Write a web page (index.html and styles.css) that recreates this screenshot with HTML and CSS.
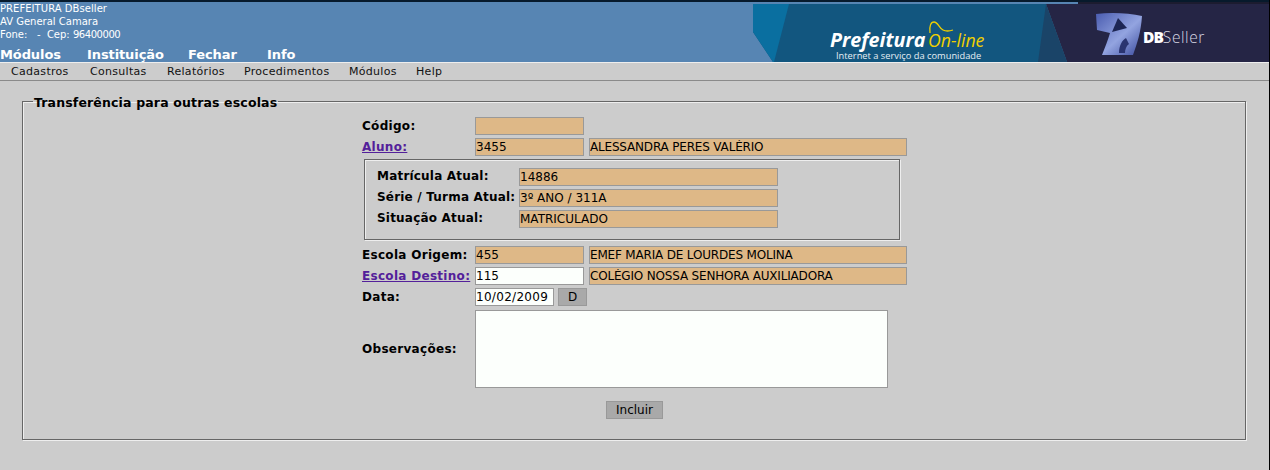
FILE: index.html
```html
<!DOCTYPE html>
<html lang="pt">
<head>
<meta charset="utf-8">
<title>Transferência para outras escolas</title>
<link rel="stylesheet" href="styles.css">
</head>
<body>
<header class="top">
  <div class="top-left">
    <div class="inst">
      <div class="l1">PREFEITURA DBseller</div>
      <div>AV General Camara</div>
      <div>Fone: &nbsp; - &nbsp;Cep: <span class="cep">96400000</span></div>
    </div>
    <nav class="mainnav">
      <span class="m1">Módulos</span><span class="m2">Instituição</span><span class="m3">Fechar</span><span class="m4">Info</span>
    </nav>
  </div>
  <svg class="banner" width="516" height="60" viewBox="0 0 516 60" xmlns="http://www.w3.org/2000/svg">
    <defs>
      <linearGradient id="cube" x1="0" y1="0" x2="1" y2="1">
        <stop offset="0" stop-color="#4a5cb0"/>
        <stop offset="0.55" stop-color="#93a4e0"/>
        <stop offset="1" stop-color="#3a4a9c"/>
      </linearGradient>
    </defs>
    <rect x="0" y="0" width="325" height="2" fill="#5785b3"/>
    <rect x="325" y="0" width="191" height="2" fill="#1c1c30"/>
    <polygon points="0,2 293,2 314,60 20,60 0,30" fill="#12567f"/>
    <polygon points="293,2 516,2 516,60 314,60" fill="#252545"/>
    <polygon points="293,2 314,60 285,60" fill="#1a4468"/>
    <polygon points="0,2 36,2 21,60 20,60 0,30" fill="#0a6fa0"/>
    <text class="b-pref" x="77" y="45">Prefeitura</text>
    <text class="b-on" x="175" y="45">On-line</text>
    <path d="M177 31 C176 24 178 20 181 20 C185 20 186 26 190 28 C193 29.5 197 29 200 28" fill="none" stroke="#f0d000" stroke-width="1.3"/>
    <text class="b-sub" x="83" y="56.5">Internet a serviço da comunidade</text>
    <path d="M343 12 C358 10 376 11 389 14 C388 30 384 42 380 53 L349 53 C352 45 355 38 357 31 L344 28 Z" fill="url(#cube)"/>
    <path d="M365 16 L374 26 L359 30 Z" fill="#1d2654"/>
    <path d="M366 51 C366 44 369 38 373 36 L376 42 C373 44 372 48 372 51 Z" fill="#2a3470"/>
    <text class="b-db" x="390" y="41">DB<tspan class="b-seller">Seller</tspan></text>
  </svg>
</header>
<nav class="menubar">
  <span class="i1">Cadastros</span><span class="i2">Consultas</span><span class="i3">Relatórios</span><span class="i4">Procedimentos</span><span class="i5">Módulos</span><span>Help</span>
</nav>
<main class="page">
  <fieldset class="outer">
    <legend>Transferência para outras escolas</legend>
    <form class="form">
      <div class="row">
        <label class="lbl">Código:</label>
        <input class="f f-code ro" type="text" value="" readonly>
      </div>
      <div class="row">
        <a class="lbl link" href="#">Aluno:</a>
        <input class="f f-code ro" type="text" value="3455" readonly>
        <input class="f f-name ro" type="text" value="ALESSANDRA PERES VALÉRIO" readonly>
      </div>
      <fieldset class="inner">
        <div class="row">
          <label class="lbl lbl-in">Matrícula Atual:</label>
          <input class="f f-in ro" type="text" value="14886" readonly>
        </div>
        <div class="row">
          <label class="lbl lbl-in">Série / Turma Atual:</label>
          <input class="f f-in ro" type="text" value="3º ANO / 311A" readonly>
        </div>
        <div class="row">
          <label class="lbl lbl-in">Situação Atual:</label>
          <input class="f f-in ro" type="text" value="MATRICULADO" readonly>
        </div>
      </fieldset>
      <div class="row">
        <label class="lbl">Escola Origem:</label>
        <input class="f f-code ro" type="text" value="455" readonly>
        <input class="f f-name ro" type="text" value="EMEF MARIA DE LOURDES MOLINA" readonly>
      </div>
      <div class="row">
        <a class="lbl link" href="#">Escola Destino:</a>
        <input class="f f-code" type="text" value="115">
        <input class="f f-name ro" type="text" value="COLÉGIO NOSSA SENHORA AUXILIADORA" readonly>
      </div>
      <div class="row">
        <label class="lbl">Data:</label>
        <input class="f f-date" type="text" value="10/02/2009">
        <button class="btn btn-d" type="button">D</button>
      </div>
      <div class="row row-obs">
        <label class="lbl">Observações:</label>
        <textarea class="obs"></textarea>
      </div>
      <div class="actions">
        <button class="btn btn-inc" type="button">Incluir</button>
      </div>
    </form>
  </fieldset>
</main>
</body>
</html>
```
FILE: styles.css
```css
* { box-sizing: border-box; }
html, body { margin: 0; padding: 0; }
body {
  width: 1270px;
  height: 470px;
  overflow: hidden;
  background: #cccccc;
  color: #000;
  font-family: "DejaVu Sans", sans-serif;
  border-right: 1px solid #000;
}
.top {
  display: flex;
  justify-content: space-between;
  height: 62px;
  background: #5785b3;
  border-top: 2px solid #071a2c;
}
.top-left { color: #fff; }
.inst { font-size: 10px; line-height: 13px; height: 46px; }
.l1 { letter-spacing: 0.05px; }
.cep { letter-spacing: -0.45px; }
.mainnav { font-size: 13px; font-weight: bold; line-height: 14px; display: flex; height: 14px; letter-spacing: -0.1px; }
.m1 { width: 87px; }
.m2 { width: 101px; }
.m3 { width: 79px; }
.banner { display: block; flex: none; }
.b-pref { font-family: "Open Sans", sans-serif; font-style: italic; font-weight: 700; font-size: 19.7px; fill: #fff; }
.b-on { font-family: "Open Sans", sans-serif; font-style: italic; font-size: 17.7px; fill: #f0d000; }
.b-sub { font-family: "Open Sans", sans-serif; font-size: 9.3px; fill: #e6eef4; }
.b-db { font-family: "Open Sans", sans-serif; font-weight: 800; font-size: 15.5px; fill: #fff; letter-spacing: -1px; }
.b-seller { font-weight: 300; fill: #d8d8e4; letter-spacing: 0.6px; }
.menubar {
  height: 19px;
  display: flex;
  padding-left: 11px;
  font-size: 11px;
  line-height: 18px;
  letter-spacing: 0.3px;
  border-bottom: 1px solid #8a8a8a;
  border-top: 1px solid #eee;
  color: #111;
}
.i1 { width: 79px; }
.i2 { width: 77px; }
.i3 { width: 77px; }
.i4 { width: 105px; }
.i5 { width: 67px; }
.page { padding: 11px 23px 0 22px; }
.outer {
  margin: 0;
  padding: 0 0 21px;
  height: 348px;
  border: 1px solid #666;
  box-shadow: 1px 1px 0 #eee, inset 1px 1px 0 #eee;
  display: block;
}
.outer legend {
  padding: 4px 1px 0;
  margin-left: 10px;
  font-weight: bold;
  font-size: 12.5px;
  line-height: 14px;
  letter-spacing: 0.15px;
}
.form {
  width: 545px;
  margin: 7px auto 0 339px;
  display: flex;
  flex-direction: column;
  gap: 3px;
}
.row { display: flex; align-items: flex-start; height: 18px; }
.lbl {
  width: 113px;
  flex: none;
  font-size: 12px;
  font-weight: bold;
  line-height: 19px;
  letter-spacing: 0.3px;
  white-space: nowrap;
}
.link { color: #53209a; text-decoration: underline; }
.f {
  height: 18px;
  margin: 0;
  padding: 0 0 1px;
  font: 12px/15px "DejaVu Sans", sans-serif;
  color: #000;
  background: #fcfffc;
  border: 1px solid #999;
  border-radius: 0;
  outline: none;
}
.ro { background: #deb887; }
.f-code { width: 109px; }
.f-name { width: 318px; margin-left: 5px; letter-spacing: -0.18px; }
.f-date { width: 79px; letter-spacing: 0.3px; }
.f-in { width: 259px; }
.inner {
  margin: 0 7px 3px 2px;
  min-width: 0;
  height: 81px;
  padding: 8px 0 0 12px;
  border: 1px solid #666;
  box-shadow: 1px 1px 0 #eee, inset 1px 1px 0 #eee;
  display: flex;
  flex-direction: column;
  gap: 3px;
}
.lbl-in { width: 142px; line-height: 17px; letter-spacing: 0.2px; }
.btn {
  height: 18px;
  padding: 0;
  margin: 0;
  font: 12px/16px "DejaVu Sans", sans-serif;
  color: #000;
  background: #a9a9a9;
  border: 1px solid #999;
  border-radius: 0;
}
.btn-d { width: 29px; margin-left: 4px; }
.btn-inc { width: 57px; }
.row-obs { height: 78px; margin-top: 1px; align-items: center; }
.obs {
  width: 413px;
  height: 78px;
  margin: 0;
  padding: 1px;
  background: #fcfffc;
  border: 1px solid #999;
  border-radius: 0;
  resize: none;
  outline: none;
  font: 12px "DejaVu Sans", sans-serif;
}
.actions { display: flex; justify-content: center; margin-top: 10px; }
```
